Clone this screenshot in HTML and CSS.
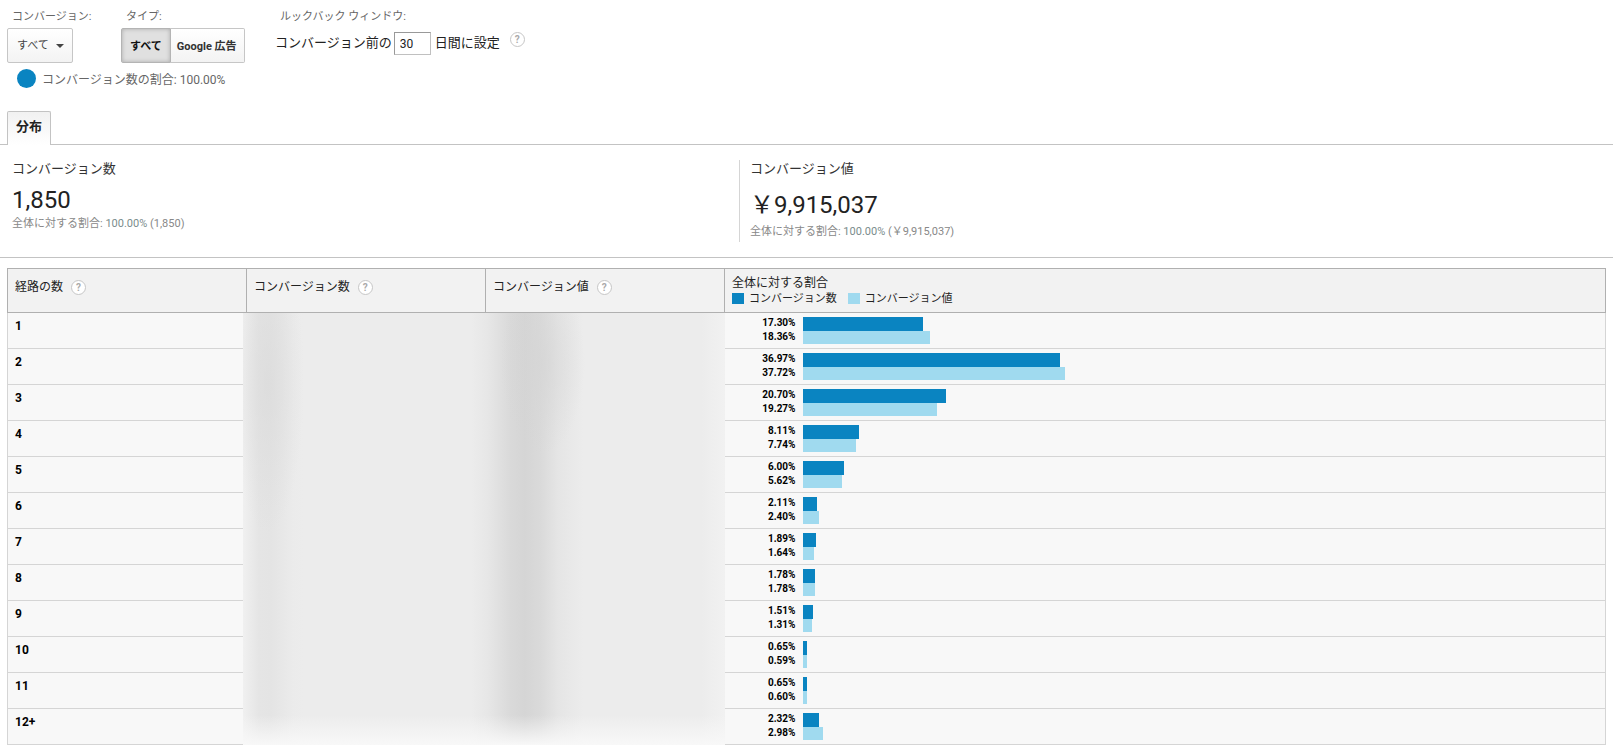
FILE: index.html
```
<!DOCTYPE html>
<html lang="ja">
	<head>
		<meta charset="UTF-8" />
		<meta name="viewport" content="width=device-width, initial-scale=1.0" />
		<title>経路の数</title>
		<link rel="stylesheet" href="styles.css">
	</head>
	<body>
		<div class="filters">
			<div class="filter filter-conversion">
				<label class="filter-label" for="conversion">コンバージョン:</label>
				<div class="select-box">
					<select id="conversion">
						<option>すべて</option>
					</select>
				</div>
			</div>
			<div class="filter filter-type">
				<span class="filter-label" id="typeLabel">タイプ:</span>
				<div class="toggle" role="group" aria-labelledby="typeLabel">
					<button type="button" class="active" aria-pressed="true">すべて</button>
					<button type="button" aria-pressed="false">Google 広告</button>
				</div>
			</div>
			<div class="filter">
				<span class="filter-label">ルックバック ウィンドウ:</span>
				<div class="lookback">
					<label for="days">コンバージョン前の</label>
					<input type="text" id="days" value="30" />
					<label for="days">日間に設定</label>
					<button type="button" class="help">?</button>
				</div>
			</div>
		</div>

		<div class="share">
			<span class="share-dot"></span>
			<span>コンバージョン数の割合: 100.00%</span>
		</div>

		<div class="tabs">
			<button type="button" class="tab">分布</button>
		</div>

		<div class="metrics">
			<div class="metric">
				<div class="metric-name">コンバージョン数</div>
				<div class="metric-value">1,850</div>
				<div class="metric-total">全体に対する割合: <span>100.00%</span> (1,850)</div>
			</div>
			<div class="metric metric-yen">
				<div class="metric-name">コンバージョン値</div>
				<div class="metric-value">￥9,915,037</div>
				<div class="metric-total">全体に対する割合: <span>100.00%</span> (￥9,915,037)</div>
			</div>
		</div>

		<div class="report">
			<table>
				<thead>
					<tr>
						<th class="col-narrow">経路の数<button type="button" class="help">?</button></th>
						<th class="col-narrow">コンバージョン数<button type="button" class="help">?</button></th>
						<th class="col-narrow">コンバージョン値<button type="button" class="help">?</button></th>
						<th class="col-share">
							<div class="share-title">全体に対する割合</div>
							<div class="legend">
								<span class="swatch swatch-count"></span>コンバージョン数
								<span class="swatch swatch-value"></span>コンバージョン値
							</div>
						</th>
					</tr>
				</thead>
				<tbody id="rows"></tbody>
			</table>
			<div class="redacted"></div>
		</div>

		<script src="script.js"></script>
	</body>
</html>
```

FILE: styles.css
```
body {
	margin: 0;
	background: #fff;
	color: #222;
	font-family: Roboto, "Noto Sans CJK JP", sans-serif;
	font-size: 13px;
}
button,
input,
select {
	font-family: inherit;
	margin: 0;
}

/* Filters */
.filters {
	display: flex;
	padding: 9px 7px 0;
}
.filter-conversion {
	width: 114px;
}
.filter-type {
	width: 154px;
}
.filter-label {
	display: block;
	padding-left: 5px;
	margin-bottom: 3px;
	font-size: 11px;
	line-height: 16px;
	color: #666;
}
.select-box {
	position: relative;
	width: 66px;
}
.select-box::after {
	content: "";
	position: absolute;
	top: 16px;
	right: 9px;
	border: 4px solid transparent;
	border-top-color: #444;
	border-bottom: 0;
	pointer-events: none;
}
.select-box select {
	appearance: none;
	width: 100%;
	height: 35px;
	padding: 0 9px;
	border: 1px solid #c6c6c6;
	border-radius: 2px;
	background: linear-gradient(#fff, #f3f3f3);
	font-size: 11px;
	color: #444;
}
.toggle {
	display: flex;
}
.toggle button {
	height: 35px;
	padding: 0 7px 2px 6px;
	border: 1px solid #c6c6c6;
	border-left: 0;
	border-radius: 0 2px 2px 0;
	background: linear-gradient(#fff, #f3f3f3);
	font-size: 11px;
	font-weight: bold;
	color: #333;
	white-space: nowrap;
}
.toggle .active {
	padding: 0 8px 2px;
	border: 1px solid #b4b4b4;
	border-radius: 2px 0 0 2px;
	background: #e0e0e0;
	box-shadow: inset 0 0 4px #aaa;
	color: #111;
}
.lookback {
	display: flex;
	align-items: center;
	height: 28px;
}
.lookback label {
	padding-bottom: 2px;
}
.lookback input {
	box-sizing: border-box;
	width: 37px;
	height: 23px;
	margin: 3px 4px 0 2px;
	padding: 0 5px;
	border: 1px solid #c0c0c0;
	border-top-color: #999;
	border-left-color: #999;
	font-size: 12px;
	color: #222;
}
.help {
	box-sizing: border-box;
	width: 15px;
	height: 15px;
	margin-left: 8px;
	padding: 0;
	border: 1px solid #c6c6c6;
	border-radius: 50%;
	background: #fff;
	font-size: 10px;
	font-weight: bold;
	line-height: 13px;
	color: #aaa;
	text-align: center;
	vertical-align: middle;
}
.lookback .help {
	margin: 0 0 5px 10px;
}

.share {
	display: flex;
	align-items: center;
	gap: 6px;
	height: 20px;
	padding: 5px 17px 0;
	font-size: 12px;
	color: #666;
}
.share-dot {
	width: 19px;
	height: 19px;
	border-radius: 50%;
	background: #0a84c1;
}

/* Tabs */
.tabs {
	display: flex;
	margin-top: 23px;
	padding: 0 7px;
	border-bottom: 1px solid #c3c3c3;
}
.tab {
	height: 34px;
	margin-bottom: -1px;
	padding: 0 8px 6px;
	border: 1px solid #c3c3c3;
	border-bottom: 0;
	border-radius: 2px 2px 0 0;
	background: linear-gradient(#f1f1f1, #fff);
	font-size: 13px;
	font-weight: bold;
	color: #222;
}

/* Metrics */
.metrics {
	display: flex;
	padding: 15px 12px;
	border-bottom: 1px solid #c3c3c3;
}
.metric {
	flex: 0 0 calc(46% - 4px);
	height: 82px;
}
.metric-yen {
	flex: 1;
	padding-left: 10px;
	border-left: 1px solid #d5d5d5;
}
.metric-name {
	line-height: 18px;
	color: #333;
}
.metric-value {
	font-size: 24px;
	line-height: 28px;
	margin: 8px 0 2px;
}
.metric-yen .metric-value {
	margin: 13px 0 5px;
}
.metric-total {
	font-size: 11px;
	line-height: 16px;
	color: #888;
}
.metric-total span {
	color: #7a8c8c;
}

/* Table */
.report {
	position: relative;
	margin: 10px 7px 0;
}
table {
	width: 100%;
	border-collapse: collapse;
	table-layout: fixed;
}
th {
	height: 43px;
	box-sizing: border-box;
	padding: 9px 7px 0;
	border: 1px solid #b0b0b0;
	background: #f2f2f2;
	font-size: 12px;
	font-weight: normal;
	line-height: 18px;
	text-align: left;
	vertical-align: top;
}
.col-narrow {
	width: 239px;
}
.col-share {
	padding: 6px 7px;
	line-height: 16px;
}
.legend {
	display: flex;
	align-items: center;
	font-size: 11px;
	line-height: 15px;
}
.swatch {
	width: 12px;
	height: 11px;
	margin-right: 5px;
}
.swatch-value {
	margin-left: 11px;
}
.swatch-count,
.bar-count {
	background: #0a84c1;
}
.swatch-value,
.bar-value {
	background: #a0daef;
}
td {
	padding: 0;
	border-bottom: 1px solid #d5d5d5;
	background: #f8f8f8;
	color: #000;
}
td:first-child {
	padding: 5px 7px 0;
	border-left: 1px solid #d5d5d5;
	font-size: 12px;
	font-weight: bold;
	line-height: 16px;
	vertical-align: top;
}
td:last-child {
	border-right: 1px solid #d5d5d5;
}
.bars {
	display: flex;
	gap: 7px;
	padding: 4px 107px 4px 0;
}
.bar-labels {
	width: 71px;
	height: 27px;
	font-size: 10px;
	font-weight: bold;
	line-height: 14px;
	text-align: right;
	margin-top: -1px;
}
.bar-track {
	flex: 1;
}
.bar-count {
	height: 14px;
}
.bar-value {
	height: 13px;
}

/* Smudged cells of the two value columns */
.redacted {
	position: absolute;
	top: 45px;
	bottom: 0;
	left: 236px;
	width: 482px;
	background:
		linear-gradient(to top, #f8f8f8, rgba(248, 248, 248, 0) 30px),
		linear-gradient(to left, #f1f1f1, rgba(241, 241, 241, 0) 24px),
		radial-gradient(ellipse 42px 90px at 300px 50px, rgba(212, 212, 212, 0.6), rgba(212, 212, 212, 0)),
		radial-gradient(ellipse 36px 150px at 25px 70px, rgba(218, 218, 218, 0.7), rgba(218, 218, 218, 0)),
		linear-gradient(to right, #f0f0f0, #e5e5e5 16px, #e4e4e4 28px, #ebebeb 50px, #ececec 60px, #ececec 228px, #e7e7e7 244px, #d9d9d9 268px, #d5d5d5 282px, #dadada 298px, #e5e5e5 315px, #ececec 340px);
}
```

FILE: script.js
```
const data = [
	["1", "17.30", "18.36"],
	["2", "36.97", "37.72"],
	["3", "20.70", "19.27"],
	["4", "8.11", "7.74"],
	["5", "6.00", "5.62"],
	["6", "2.11", "2.40"],
	["7", "1.89", "1.64"],
	["8", "1.78", "1.78"],
	["9", "1.51", "1.31"],
	["10", "0.65", "0.59"],
	["11", "0.65", "0.60"],
	["12+", "2.32", "2.98"],
]

document.getElementById("rows").innerHTML = data
	.map(
		([path, count, value]) => `
		<tr>
			<td>${path}</td>
			<td></td>
			<td></td>
			<td>
				<div class="bars">
					<div class="bar-labels">
						<div>${count}%</div>
						<div>${value}%</div>
					</div>
					<div class="bar-track">
						<div class="bar-count" style="width: ${count}%"></div>
						<div class="bar-value" style="width: ${value}%"></div>
					</div>
				</div>
			</td>
		</tr>`
	)
	.join("")
```
